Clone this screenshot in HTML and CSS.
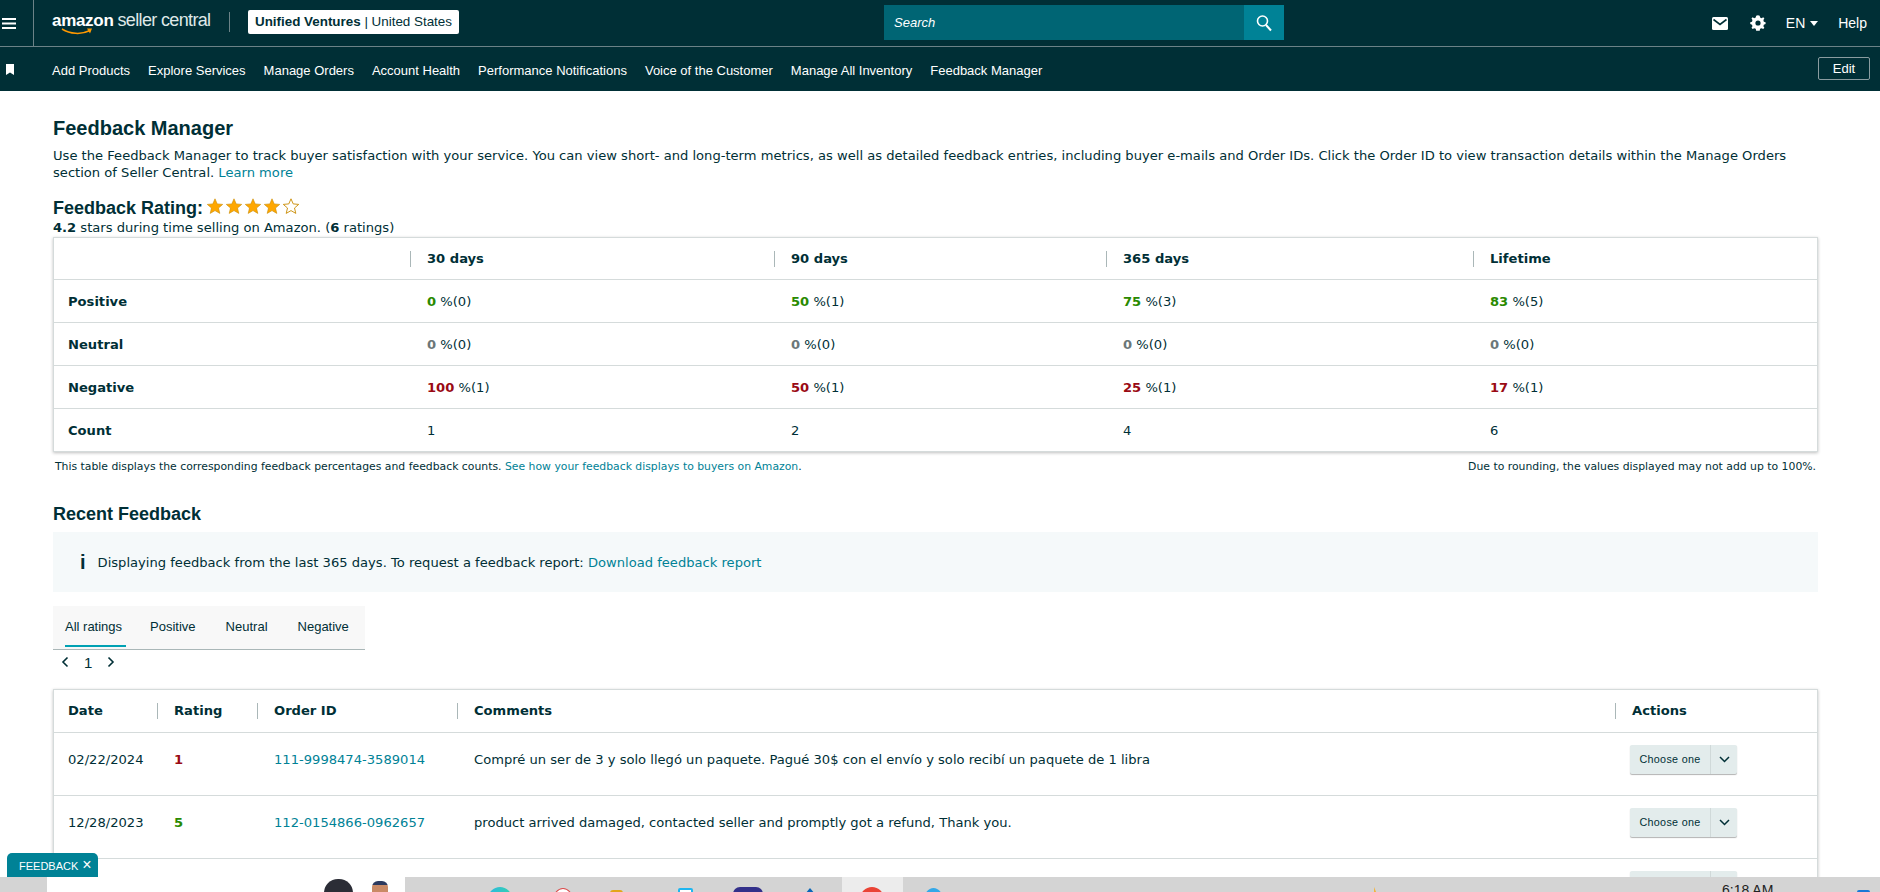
FILE: index.html
```html
<!DOCTYPE html>
<html>
 <head>
  <meta charset="utf-8">
  <title>Feedback Manager</title>
  <link rel="stylesheet" href="styles.css">
 </head>
 <body>
  <header class="topbar">
    <div class="topMain">
      <div class="burger">
        <svg width="14" height="11" viewBox="0 0 14 11"><path d="M0 1h14M0 5.500h14M0 10h14" stroke="#fff" stroke-width="1.800"/></svg>
      </div>
      <div class="brand">
        <span class="logoWord">amazon</span><span class="logoRest">seller central</span>
        <svg class="smile" width="32" height="7" viewBox="0 0 32 7"><path d="M1 1c8 5 19 6 28 1.500" fill="none" stroke="#f90" stroke-width="1.500"/><path d="M26 .5l5 0-2 5z" fill="#f90"/></svg>
      </div>
      <div class="acct"><b>Unified Ventures</b> | United States</div>
      <div class="search">
        <div class="searchText">Search</div>
        <div class="searchBtn">
          <svg width="18" height="18" viewBox="0 0 18 18"><circle cx="7.500" cy="7" r="5" fill="none" stroke="#fff" stroke-width="1.600"/><path d="M11 11l5 5.500" stroke="#fff" stroke-width="2"/></svg>
        </div>
      </div>
      <div class="topRight">
        <svg class="mail" width="16" height="13" viewBox="0 0 16 13"><rect width="16" height="13" rx="1.500" fill="#fff"/><path d="M1.500 2.500L8 7.500l6.500-5" fill="none" stroke="#002f36" stroke-width="1.600"/></svg>
        <svg class="gear" width="18" height="18" viewBox="0 0 18 18"><path d="M9 1.500l2 .4.5 2 1.700.8 1.800-1 1.300 1.500-1.100 1.700.5 1.800 2 .7v2l-2 .7-.5 1.800 1.100 1.700-1.300 1.500-1.800-1-1.700.8-.5 2h-4l-.5-2-1.700-.8-1.800 1-1.300-1.500 1.100-1.700-.5-1.800-2-.7v-2l2-.7.5-1.800-1.100-1.700 1.300-1.500 1.800 1 1.700-.8.500-2z" transform="translate(1 0) scale(.88)" fill="#fff"/><circle cx="9" cy="9" r="2.600" fill="#002f36"/></svg>
        <span class="lang">EN <i class="caret"></i></span>
        <span>Help</span>
      </div>
    </div>
    <nav class="topNav">
      <svg class="bookmark" width="8" height="11" viewBox="0 0 8 11"><path d="M0 0h8v11L4 8.500 0 11z" fill="#fff"/></svg>
      <a>Add Products</a><a>Explore Services</a><a>Manage Orders</a><a>Account Health</a><a>Performance Notifications</a><a>Voice of the Customer</a><a>Manage All Inventory</a><a>Feedback Manager</a>
      <button class="edit">Edit</button>
    </nav>
  </header>

  <main class="page">
    <h1>Feedback Manager</h1>
    <p class="intro">Use the Feedback Manager to track buyer satisfaction with your service. You can view short- and long-term metrics, as well as detailed feedback entries, including buyer e-mails and Order IDs. Click the Order ID to view transaction details within the Manage Orders section of Seller Central. <a>Learn more</a></p>

    <div class="ratingHead">
      <h2>Feedback Rating:</h2>
      <svg class="stars" width="94" height="18" viewBox="0 0 94 18">
        <defs><path id="star" d="M8 .8l2.200 5.100 5.500.5-4.200 3.600 1.300 5.400L8 12.600l-4.800 2.800 1.300-5.400L.3 6.400l5.500-.5z"/></defs>
        <use href="#star" x="1" y="1" fill="#ffa700" stroke="#c88a00" stroke-width=".6"/>
        <use href="#star" x="20" y="1" fill="#ffa700" stroke="#c88a00" stroke-width=".6"/>
        <use href="#star" x="39" y="1" fill="#ffa700" stroke="#c88a00" stroke-width=".6"/>
        <use href="#star" x="58" y="1" fill="#ffa700" stroke="#c88a00" stroke-width=".6"/>
        <use href="#star" x="77" y="1" fill="#fff" stroke="#c88a00" stroke-width=".9"/>
      </svg>
    </div>
    <p class="starsLine"><b>4.2</b> stars during time selling on Amazon. (<b>6</b> ratings)</p>

    <div class="card">
      <div class="statRow statHead">
        <div></div>
        <div class="th"><span>30 days</span></div>
        <div class="th"><span>90 days</span></div>
        <div class="th"><span>365 days</span></div>
        <div class="th"><span>Lifetime</span></div>
      </div>
      <div class="statRow">
        <div class="label">Positive</div>
        <div><b class="pos">0</b> %(0)</div><div><b class="pos">50</b> %(1)</div><div><b class="pos">75</b> %(3)</div><div><b class="pos">83</b> %(5)</div>
      </div>
      <div class="statRow">
        <div class="label">Neutral</div>
        <div><b class="neu">0</b> %(0)</div><div><b class="neu">0</b> %(0)</div><div><b class="neu">0</b> %(0)</div><div><b class="neu">0</b> %(0)</div>
      </div>
      <div class="statRow">
        <div class="label">Negative</div>
        <div><b class="neg">100</b> %(1)</div><div><b class="neg">50</b> %(1)</div><div><b class="neg">25</b> %(1)</div><div><b class="neg">17</b> %(1)</div>
      </div>
      <div class="statRow">
        <div class="label">Count</div>
        <div>1</div><div>2</div><div>4</div><div>6</div>
      </div>
    </div>
    <div class="tableNote">
      <span>This table displays the corresponding feedback percentages and feedback counts. <a>See how your feedback displays to buyers on Amazon</a>.</span>
      <span>Due to rounding, the values displayed may not add up to 100%.</span>
    </div>

    <h2 class="recent">Recent Feedback</h2>
    <div class="notice"><i class="infoI">i</i>Displaying feedback from the last 365 days. To request a feedback report:&nbsp;<a>Download feedback report</a></div>

    <div class="tabs">
      <span class="tab active">All ratings</span><span class="tab">Positive</span><span class="tab">Neutral</span><span class="tab">Negative</span>
    </div>
    <div class="pager">
      <svg width="8" height="12" viewBox="0 0 8 12"><path d="M6.500 1.500L2 6l4.500 4.500" fill="none" stroke="#002f36" stroke-width="1.600"/></svg>
      <span>1</span>
      <svg width="8" height="12" viewBox="0 0 8 12"><path d="M1.500 1.500L6 6l-4.500 4.500" fill="none" stroke="#002f36" stroke-width="1.600"/></svg>
    </div>

    <div class="card">
      <div class="fbRow fbHead">
        <div class="th first">Date</div>
        <div class="th"><span>Rating</span></div>
        <div class="th"><span>Order ID</span></div>
        <div class="th"><span>Comments</span></div>
        <div class="th"><span>Actions</span></div>
      </div>
      <div class="fbRow">
        <div>02/22/2024</div><div><b class="neg">1</b></div><div><a>111-9998474-3589014</a></div>
        <div>Compré un ser de 3 y solo llegó un paquete. Pagué 30$ con el envío y solo recibí un paquete de 1 libra</div>
        <div class="choose"><span>Choose one</span><span class="chev"><svg width="11" height="7" viewBox="0 0 11 7"><path d="M1 1l4.500 4.500L10 1" fill="none" stroke="#002f36" stroke-width="1.500"/></svg></span></div>
      </div>
      <div class="fbRow">
        <div>12/28/2023</div><div><b class="pos">5</b></div><div><a>112-0154866-0962657</a></div>
        <div>product arrived damaged, contacted seller and promptly got a refund, Thank you.</div>
        <div class="choose"><span>Choose one</span><span class="chev"><svg width="11" height="7" viewBox="0 0 11 7"><path d="M1 1l4.500 4.500L10 1" fill="none" stroke="#002f36" stroke-width="1.500"/></svg></span></div>
      </div>
      <div class="fbRow">
        <div></div><div></div><div></div><div></div>
        <div class="choose"><span></span><span class="chev"></span></div>
      </div>
    </div>
  </main>

  <div class="feedbackTab">FEEDBACK<span>×</span></div>

  <footer class="taskbar">
    <div class="taskSearch">
      <span class="dome"></span>
      <span class="boxer"></span>
    </div>
    <span class="tIcon teal"></span>
    <span class="tIcon redRing"></span>
    <span class="tIcon folder"></span>
    <span class="tIcon blueBox"></span>
    <span class="tIcon indigo"></span>
    <span class="tIcon house"></span>
    <span class="activeTile"><span class="tIcon chrome"></span></span>
    <span class="tIcon sky"></span>
    <span class="tIcon sun"></span>
    <div class="taskClock">6:18 AM</div>
    <span class="tIcon winBlue"></span>
  </footer>
 </body>
</html>
```

FILE: styles.css
```css
* {
  margin: 0;
  padding: 0;
  box-sizing: border-box;
}
html, body {
  height: 892px;
  overflow: hidden;
}
body {
  font-family: "DejaVu Sans", sans-serif;
  font-size: 13.1px;
  color: #002f36;
  background: #fff;
}
a {
  color: #008296;
}
b {
  font-weight: 700;
}

.topbar {
  background: #002f36;
  color: #fff;
  font-family: "Liberation Sans", sans-serif;
}
.topMain {
  height: 47px;
  display: flex;
  align-items: center;
  border-bottom: 1px solid #6b8287;
  position: relative;
}
.burger {
  width: 34px;
  height: 46px;
  border-right: 1px solid #6b8287;
  display: flex;
  align-items: center;
  padding-left: 2px;
}
.brand {
  width: 178px;
  height: 20px;
  margin: -2px 0 0 18px;
  border-right: 1px solid #6b8287;
  position: relative;
  display: flex;
  align-items: center;
  padding-bottom: 3px;
}
.logoWord {
  font-size: 17px;
  font-weight: 700;
  letter-spacing: -0.3px;
}
.logoRest {
  font-size: 18px;
  margin-left: 4px;
  letter-spacing: -0.65px;
  color: #dfe8e8;
}
.smile {
  position: absolute;
  left: 9px;
  top: 16px;
}
.acct {
  margin: -2px 0 0 18px;
  background: #fff;
  color: #002f36;
  border-radius: 2px;
  height: 24px;
  line-height: 24px;
  padding: 0 7px;
  font-size: 13.4px;
}
.search {
  position: absolute;
  left: 884px;
  top: 5px;
  width: 400px;
  height: 35px;
  display: flex;
  background: #006574;
}
.searchText {
  flex: 1;
  font-style: italic;
  font-size: 13px;
  line-height: 35px;
  padding-left: 10px;
}
.searchBtn {
  width: 40px;
  background: #008296;
  display: flex;
  align-items: center;
  justify-content: center;
}
.topRight {
  margin-left: auto;
  display: flex;
  align-items: center;
  padding-right: 13px;
  font-size: 14px;
}
.mail {
  margin-right: 21px;
}
.gear {
  margin-right: 19px;
}
.lang {
  margin-right: 20px;
}
.caret {
  display: inline-block;
  border: 4px solid transparent;
  border-top: 5px solid #fff;
  border-bottom: 0;
  vertical-align: 2px;
  margin-left: 1px;
}
.topNav {
  height: 44px;
  display: flex;
  align-items: center;
  font-size: 13px;
  padding: 2px 10px 0 6px;
}
.topNav a {
  color: #fff;
  margin-right: 18px;
}
.bookmark {
  margin: -2px 38px 0 0;
}
.edit {
  margin: -3px 0 0 auto;
  width: 52px;
  height: 23px;
  background: transparent;
  border: 1px solid #8a9ca0;
  border-radius: 2px;
  color: #fff;
  font: 13px "Liberation Sans", sans-serif;
}

.page {
  padding: 0 62px 0 53px;
}
h1 {
  font: 700 20px/24px "Liberation Sans", sans-serif;
  margin-top: 25px;
}
.intro {
  line-height: 17px;
  margin-top: 7px;
}
.ratingHead {
  display: flex;
  align-items: center;
  margin-top: 16px;
  height: 22px;
}
h2 {
  font: 700 18px/22px "Liberation Sans", sans-serif;
}
.stars {
  margin-left: 3px;
  margin-top: -4px;
}
.starsLine {
  line-height: 16px;
  margin: 1px 0;
}
.card {
  border: 1px solid #d5dbdb;
  box-shadow: 0 1px 3px rgba(0, 0, 0, 0.25);
  background: #fff;
}
.statRow {
  display: grid;
  grid-template-columns: 359px 364px 332px 367px 1fr;
  align-items: center;
  height: 43px;
  padding-left: 14px;
  border-top: 1px solid #d5dbdb;
}
.statHead {
  height: 41px;
  border-top: 0;
}
.th {
  font-weight: 700;
  height: 16px;
  line-height: 16px;
}
.th span {
  display: block;
  margin-left: -17px;
  border-left: 1px solid #aab7b8;
  padding-left: 16px;
}
.label {
  font-weight: 700;
}
.pos {
  color: #2a8a00;
}
.neu {
  color: #6c7778;
}
.neg {
  color: #9a0a14;
}
.tableNote {
  display: flex;
  justify-content: space-between;
  font-size: 10.83px;
  line-height: 14px;
  margin-top: 8px;
  padding: 0 2px;
}
.recent {
  margin-top: 29px;
}
.notice {
  margin-top: 7px;
  height: 60px;
  background: #f5f9fa;
  display: flex;
  align-items: center;
  padding-left: 27px;
}
.infoI {
  font: 700 20px "Liberation Sans", sans-serif;
  margin-right: 12px;
}
.tabs {
  margin-top: 14px;
  width: 312px;
  height: 44px;
  background: #f8f8f8;
  border-bottom: 1px solid #aab7b8;
  display: flex;
  align-items: flex-start;
  font: 13px "Liberation Sans", sans-serif;
  padding-left: 12px;
}
.tab {
  flex: none;
  height: 41px;
  line-height: 42px;
  margin-right: 30px;
  white-space: nowrap;
}
.tab.active {
  border-bottom: 2px solid #00a1b3;
  padding-right: 4px;
  margin-right: 24px;
}
.pager {
  display: flex;
  align-items: center;
  gap: 15px;
  height: 20px;
  margin: 2px 0 17px;
  padding-left: 8px;
  font: 15px "Liberation Sans", sans-serif;
}
.fbRow {
  display: grid;
  grid-template-columns: 106px 100px 200px 1158px 1fr;
  align-items: start;
  height: 63px;
  padding: 12px 0 0 14px;
  line-height: 29px;
  border-top: 1px solid #d5dbdb;
}
.fbHead {
  height: 42px;
  border-top: 0;
  padding-top: 0;
  align-items: center;
}
.choose {
  display: flex;
  width: 107px;
  height: 29px;
  margin-left: -2px;
  background: #e3ecec;
  border-radius: 2px;
  box-shadow: 0 1px 1px rgba(0, 0, 0, 0.3);
  font: 10.75px/29px "Liberation Sans", sans-serif;
  letter-spacing: .3px;
}
.choose span:first-child {
  width: 80px;
  text-align: center;
}
.chev {
  width: 27px;
  border-left: 1px solid #d0d9d9;
  display: flex;
  align-items: center;
  justify-content: center;
}

.feedbackTab {
  position: fixed;
  left: 7px;
  top: 853px;
  width: 91px;
  height: 24px;
  background: #008296;
  color: #fff;
  border-radius: 5px 5px 0 0;
  font: 11px/26px "Liberation Sans", sans-serif;
  padding-left: 12px;
}
.feedbackTab span {
  font-size: 16px;
  line-height: 20px;
  margin-left: 4px;
}
.taskbar {
  position: fixed;
  left: 0;
  top: 877px;
  width: 1880px;
  height: 15px;
  background: #d4d4d4;
  display: flex;
  overflow: hidden;
}
.taskSearch {
  flex: none;
  width: 358px;
  height: 15px;
  margin-left: 47px;
  background: #fff;
  display: flex;
}
.dome {
  width: 29px;
  height: 24px;
  margin: 2px 0 0 277px;
  border-radius: 14px 14px 0 0;
  background: #2b2d36;
}
.boxer {
  width: 16px;
  height: 20px;
  margin: 4px 0 0 19px;
  border-radius: 6px 6px 0 0;
  background: linear-gradient(#2c3a5e 0 4px, #c98a66 4px);
  box-shadow: 3px 6px 0 -3px #d8352a;
}
.tIcon {
  flex: none;
  display: block;
  height: 24px;
}
.teal {
  width: 24px;
  margin: 10px 0 0 83px;
  border-radius: 50%;
  background: linear-gradient(90deg, #2fb9e0, #35d0b0);
}
.redRing {
  width: 20px;
  margin: 11px 0 0 41px;
  border: 1px solid #d84a4a;
  border-radius: 50%;
  background: #fff;
}
.folder {
  width: 13px;
  margin: 13px 0 0 37px;
  border-radius: 3px 3px 0 0;
  background: #e3a51a;
}
.blueBox {
  width: 15px;
  margin: 11px 0 0 55px;
  border: 2px solid #1fb6f0;
  border-radius: 2px;
  background: #fff;
}
.indigo {
  width: 30px;
  margin: 10px 0 0 40px;
  border-radius: 7px 7px 0 0;
  background: #33308a;
}
.house {
  width: 14px;
  margin: 11px 0 0 40px;
  background: #0a66b8;
  clip-path: polygon(50% 0, 100% 35%, 100% 100%, 0 100%, 0 35%);
}
.activeTile {
  flex: none;
  width: 61px;
  margin-left: 25px;
  background: #ececec;
  display: block;
}
.chrome {
  width: 24px;
  margin: 10px 0 0 18px;
  border-radius: 50%;
  background: #ea4335;
}
.sky {
  width: 19px;
  margin: 11px 0 0 21px;
  border-radius: 50%;
  background: #34a8e8;
}
.sun {
  width: 6px;
  margin: 10px 0 0 431px;
  background: #f2b33d;
  clip-path: polygon(0 0, 100% 60%, 100% 100%, 0 100%);
}
.taskClock {
  flex: none;
  width: 135px;
  margin-left: 342px;
  padding-top: 6px;
  font: 14px/14px "Liberation Sans", sans-serif;
  color: #222;
}
.winBlue {
  width: 13px;
  margin: 13px 0 0 0;
  background: #1a78d6;
  border-radius: 2px 2px 0 0;
}
```
